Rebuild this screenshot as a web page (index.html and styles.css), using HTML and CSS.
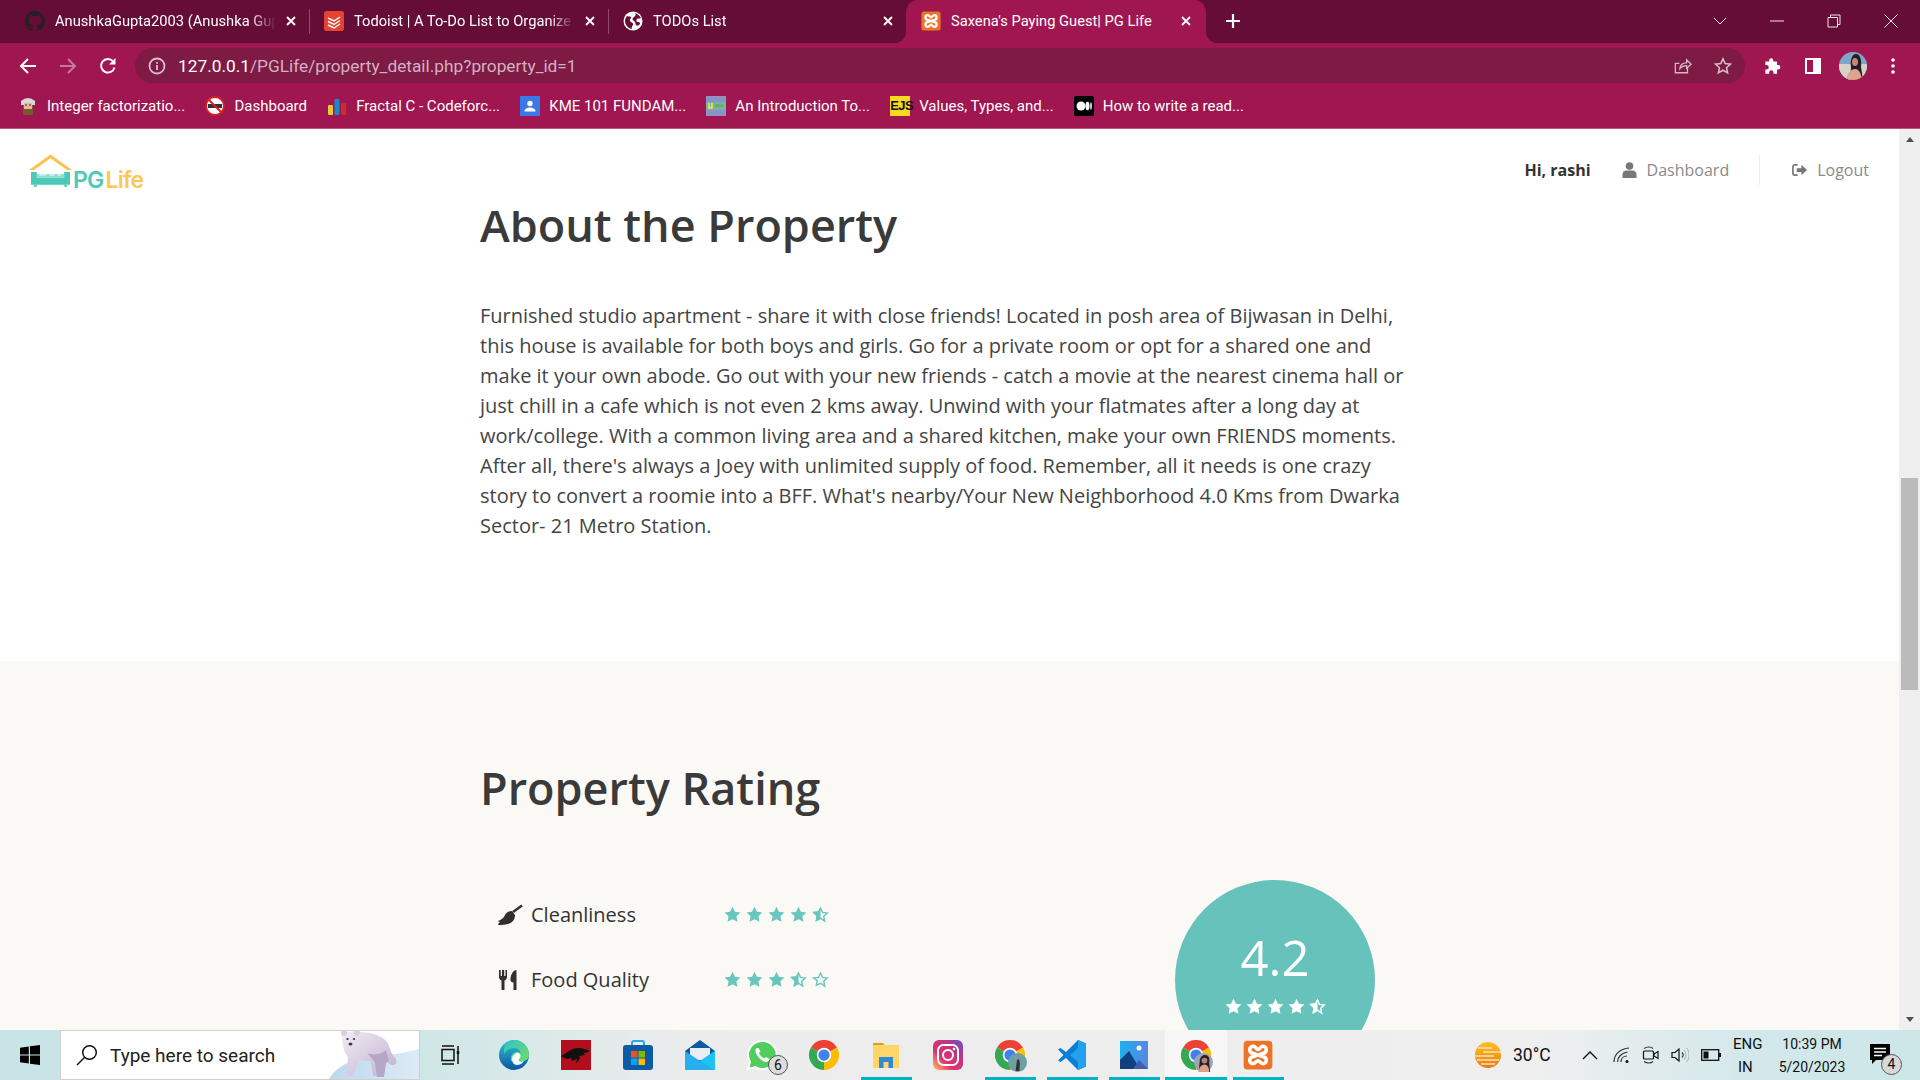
FILE: index.html
```html
<!DOCTYPE html>
<html lang="en">
<head>
<meta charset="utf-8">
<title>Saxena's Paying Guest| PG Life</title>
<link rel="stylesheet" href="styles.css">
</head>
<body>
<svg class="defs" aria-hidden="true">
  <symbol id="star" viewBox="0 0 24 24"><path d="M12 1l3.4 7.2 7.8 1-5.7 5.4 1.5 7.8L12 18.600l-7 3.800 1.500-7.800L.8 9.200l7.800-1z" fill="currentColor"/></symbol>
  <symbol id="star-half" viewBox="0 0 24 24"><path d="M12 2.800l2.800 6.200 6.800.9-5 4.700 1.300 6.700L12 17.200l-5.900 3.100 1.300-6.700-5-4.700 6.800-.9z" fill="none" stroke="currentColor" stroke-width="2"/><path d="M12 1v17.600l-7 3.800 1.500-7.800L.8 9.200l7.800-1z" fill="currentColor"/></symbol>
  <symbol id="star-empty" viewBox="0 0 24 24"><path d="M12 3l2.800 6.100 6.700.9-4.900 4.600 1.300 6.600L12 17.400l-5.900 2.800 1.300-6.600L2.500 10l6.700-.9z" fill="none" stroke="currentColor" stroke-width="2"/></symbol>
  <symbol id="chrome" viewBox="0 0 24 24"><path d="M12 12L1.600 6A12 12 0 0 1 22.400 6z" fill="#ea4335"/><path d="M12 12L22.400 6A12 12 0 0 1 12 24z" fill="#fbbc04"/><path d="M12 12L12 24A12 12 0 0 1 1.600 6z" fill="#34a853"/><circle cx="12" cy="12" r="5.800" fill="#fff"/><circle cx="12" cy="12" r="4.500" fill="#3f82ee"/></symbol>
  <symbol id="xampp" viewBox="0 0 24 24"><rect x=".5" y=".5" width="23" height="23" rx="3" fill="#ec7327"/><path d="M8 5c-3.500 0-3.500 5.400 0 5.600 2 .2 2.500 1.400 4 1.400s2-1.200 4-1.400c3.500-.2 3.500-5.600 0-5.600-2.400 0-2.400 2.500-4 2.500S10.400 5 8 5zM8 19c-3.500 0-3.500-5.400 0-5.600 2-.2 2.500-1.400 4-1.400s2 1.200 4 1.400c3.500.2 3.500 5.600 0 5.600-2.400 0-2.400-2.500-4-2.500S10.400 19 8 19z" fill="none" stroke="#fff" stroke-width="2.800"/></symbol>
</svg>

<header class="tabstrip">
  <div class="tab">
    <svg class="favicon" viewBox="0 0 16 16"><path fill="#241f24" d="M8 0C3.580 0 0 3.580 0 8c0 3.540 2.290 6.530 5.470 7.590.4.070.55-.17.55-.38 0-.19-.01-.82-.01-1.490-2.010.37-2.530-.49-2.690-.94-.09-.23-.48-.94-.82-1.130-.28-.15-.68-.52-.01-.53.63-.01 1.080.58 1.230.82.72 1.210 1.870.87 2.330.66.070-.52.28-.87.51-1.070-1.780-.2-3.640-.89-3.640-3.950 0-.87.31-1.590.82-2.150-.08-.2-.36-1.020.08-2.120 0 0 .67-.21 2.200.82.64-.18 1.320-.27 2-.27.68 0 1.360.09 2 .27 1.530-1.040 2.200-.82 2.200-.82.44 1.100.16 1.920.08 2.120.51.56.82 1.270.82 2.150 0 3.070-1.870 3.750-3.650 3.950.29.25.54.73.54 1.480 0 1.070-.01 1.930-.01 2.200 0 .21.15.46.55.38A8.013 8.013 0 0016 8c0-4.420-3.580-8-8-8z"/></svg>
    <span class="tab-title">AnushkaGupta2003 (Anushka Gupta)</span>
    <svg class="tab-close" viewBox="0 0 10 10"><path d="M1 1l8 8M9 1l-8 8"/></svg>
  </div>
  <div class="tab">
    <svg class="favicon" viewBox="0 0 20 20"><rect width="20" height="20" rx="2.500" fill="#e44332"/><path d="M4 7l6 3 6-4M4 10.500l6 3 6-4M4 14l6 3 6-4" fill="none" stroke="#fff" stroke-width="1.500"/></svg>
    <span class="tab-title">Todoist | A To-Do List to Organize Your Work</span>
    <svg class="tab-close" viewBox="0 0 10 10"><path d="M1 1l8 8M9 1l-8 8"/></svg>
  </div>
  <div class="tab tab-last">
    <svg class="favicon" viewBox="0 0 20 20"><circle cx="10" cy="10" r="9.500" fill="#fff"/><path d="M4 5c2 1 3 0 4 1s-2 2-1 4 3 1 3 3-2 3-1 5c-3 0-7-4-7-8 0-2 1-4 2-5zM12 2c2 .5 5 3 6 5-2 1-3 0-4 1s-1 3 1 3 2 1 2 2c-2 2-3 2-4 1s0-3-2-4-2-3 0-4 2-3 1-4z" fill="#640d35"/></svg>
    <span class="tab-title">TODOs List</span>
    <svg class="tab-close" viewBox="0 0 10 10"><path d="M1 1l8 8M9 1l-8 8"/></svg>
  </div>
  <div class="tab tab-active">
    <svg class="favicon"><use href="#xampp"/></svg>
    <span class="tab-title">Saxena's Paying Guest| PG Life</span>
    <svg class="tab-close" viewBox="0 0 10 10"><path d="M1 1l8 8M9 1l-8 8"/></svg>
  </div>
  <svg class="tab-new" viewBox="0 0 14 14"><path d="M7 0v14M0 7h14"/></svg>
  <div class="win-controls">
    <div class="win-btn"><svg class="win-icon" viewBox="0 0 14 14"><path d="M1 4l6 6 6-6"/></svg></div>
    <div class="win-btn"><svg class="win-icon" viewBox="0 0 14 14"><path d="M0 7h14"/></svg></div>
    <div class="win-btn"><svg class="win-icon" viewBox="0 0 14 14"><path d="M1 3.500h9.500V13H1zM3.500 3.500V1H13v9.500h-2.500"/></svg></div>
    <div class="win-btn"><svg class="win-icon" viewBox="0 0 14 14"><path d="M.5.500l13 13M13.500.500l-13 13"/></svg></div>
  </div>
</header>

<nav class="toolbar">
  <div class="tool-btn"><svg class="tool-icon" viewBox="0 0 18 18"><path d="M17 9H2M9 2L2 9l7 7" fill="none" stroke="#fff" stroke-width="2"/></svg></div>
  <div class="tool-btn"><svg class="tool-icon" viewBox="0 0 18 18"><path d="M1 9h15M9 2l7 7-7 7" fill="none" stroke="#c9789a" stroke-width="2"/></svg></div>
  <div class="tool-btn"><svg class="tool-icon" viewBox="0 0 18 18"><path d="M15.500 10.500A6.800 6.800 0 1 1 14 4.200" fill="none" stroke="#fff" stroke-width="2"/><path d="M16.500 1v6.500H10z" fill="#fff"/></svg></div>
  <div class="omnibox">
    <svg class="info-icon" viewBox="0 0 18 18"><circle cx="9" cy="9" r="7.500" fill="none" stroke="#d5c0ca" stroke-width="1.800"/><path d="M9 8v5M9 5v1.800" stroke="#d5c0ca" stroke-width="1.800"/></svg>
    <span class="url"><span class="url-host">127.0.0.1</span>/PGLife/property_detail.php?property_id=1</span>
    <div class="omni-actions">
      <div class="tool-btn"><svg class="tool-icon" viewBox="0 0 20 20"><path d="M15 11.500V17.500H1.500V7H6M6.500 13c.5-4 3.500-6.500 7.500-6.500V3l5 5-5 4.500V9.500c-3 0-5.500 1-7.500 3.500z" fill="none" stroke="#d0bcc6" stroke-width="1.400"/></svg></div>
      <div class="tool-btn"><svg class="tool-icon" viewBox="0 0 20 20"><path d="M10 2l2.400 5.300 5.800.7-4.300 3.900 1.200 5.700-5.100-2.900-5.100 2.900 1.200-5.700L1.800 8l5.800-.7z" fill="none" stroke="#d5c0ca" stroke-width="1.700"/></svg></div>
    </div>
  </div>
  <div class="tool-end">
    <div class="tool-btn"><svg class="tool-icon" viewBox="0 0 20 20"><path d="M8 1.500a2.300 2.300 0 0 1 2.300 2.300V5h4.200v4h1.200a2.500 2.500 0 0 1 0 5h-1.200v4.500H10.500v-1.400a2.400 2.400 0 0 0-4.800 0v1.400H1.500v-4.500h1.300a2.500 2.500 0 0 0 0-5H1.500V5h4.200V3.800A2.300 2.300 0 0 1 8 1.500z" fill="#fff"/></svg></div>
    <div class="tool-btn"><svg class="tool-icon" viewBox="0 0 18 18"><path d="M1 1h16v16H1zM3 3v12h6V3z" fill="#fff" fill-rule="evenodd"/></svg></div>
    <div class="tool-btn"><svg class="avatar" viewBox="0 0 28 28"><defs><clipPath id="av"><circle cx="14" cy="14" r="14"/></clipPath></defs><g clip-path="url(#av)"><rect width="28" height="28" fill="#7fa6c8"/><rect y="12" width="28" height="16" fill="#d6d2c8"/><path d="M11 28l1-13c-1-7 1-13 5-13s6 6 5 13l2 13z" fill="#231f27"/><ellipse cx="16" cy="10" rx="3" ry="4" fill="#c08a70"/><path d="M7 28c1-7 5-11 9-11s6 4 7 11z" fill="#e0a58c"/></g></svg></div>
    <div class="tool-btn"><svg class="tool-icon" viewBox="0 0 18 18"><circle cx="9" cy="3" r="1.800" fill="#fff"/><circle cx="9" cy="9" r="1.800" fill="#fff"/><circle cx="9" cy="15" r="1.800" fill="#fff"/></svg></div>
  </div>
</nav>

<nav class="bookmarks">
  <div class="bookmark"><svg class="bm-icon" viewBox="0 0 20 20"><rect x="5" y="6" width="10" height="13" fill="#7a5a30"/><path d="M3 5q7-6 14 0v4H3z" fill="#d8d8d8"/><rect x="6" y="7" width="8" height="6" fill="#e8b890"/><path d="M7 9h2M11 9h2" stroke="#333" stroke-width="1"/></svg><span>Integer factorizatio...</span></div>
  <div class="bookmark"><svg class="bm-icon" viewBox="0 0 20 20"><circle cx="10" cy="10" r="9" fill="#fff" stroke="#d81f26" stroke-width="2"/><rect x="3" y="8" width="14" height="4" fill="#333"/><path d="M4 4l12 12" stroke="#d81f26" stroke-width="2"/></svg><span>Dashboard</span></div>
  <div class="bookmark"><svg class="bm-icon" viewBox="0 0 20 20"><rect x="1" y="9" width="5" height="10" rx="1" fill="#f5c33b"/><rect x="7.500" y="3" width="5" height="16" rx="1" fill="#1a88c9"/><rect x="14" y="7" width="5" height="12" rx="1" fill="#c92c2c"/></svg><span>Fractal C - Codeforc...</span></div>
  <div class="bookmark"><svg class="bm-icon" viewBox="0 0 20 20"><rect width="20" height="20" rx="1" fill="#3b78e7"/><circle cx="10" cy="7.500" r="2.700" fill="#fff"/><path d="M4.500 15.500c0-3 3-4 5.500-4s5.500 1 5.500 4z" fill="#fff"/></svg><span>KME 101 FUNDAM...</span></div>
  <div class="bookmark"><svg class="bm-icon" viewBox="0 0 20 20"><rect width="20" height="20" fill="#8d92c4"/><rect y="6" width="20" height="8" fill="#7fb0a8"/><path d="M3 7v5h3V7" fill="none" stroke="#ecec3a" stroke-width="1.500"/><rect x="9" y="8" width="8" height="3" fill="#59b56a"/></svg><span>An Introduction To...</span></div>
  <div class="bookmark"><span class="ejs">EJS</span><span>Values, Types, and...</span></div>
  <div class="bookmark"><svg class="bm-icon" viewBox="0 0 20 20"><rect width="20" height="20" rx="2" fill="#000"/><ellipse cx="7" cy="10" rx="4.500" ry="4.500" fill="#fff"/><ellipse cx="13.500" cy="10" rx="2" ry="4.300" fill="#fff"/><ellipse cx="17" cy="10" rx=".8" ry="3.800" fill="#fff"/></svg><span>How to write a read...</span></div>
</nav>

<div class="viewport">
  <main class="page">
    <div class="site-header">
      <div class="logo">
        <svg class="logo-mark" viewBox="0 0 44 34"><path d="M0 16L22 0l22 16h-5L22 4 5 16z" fill="#fcc14c"/><path d="M2 18h6v6h28v-6h6v13H2z" fill="#4dc9b8"/><path d="M8 20h28v4H8z" fill="#8fdcd0"/><path d="M10 21h8M21 21h5M29 21h4" stroke="#fff" stroke-width="1"/><path d="M5 31h3v2H5zM36 31h3v2h-3z" fill="#4dc9b8"/></svg>
        <span class="logo-text"><span class="logo-pg">PG</span> <span class="logo-life">Life</span></span>
      </div>
      <div class="site-nav">
        <span class="hi">Hi, rashi</span>
        <a class="nav-link nav-dash"><svg class="nav-icon" viewBox="0 0 14 16"><circle cx="7" cy="4" r="3.800" fill="#777"/><path d="M0 16v-3.500C0 10 2 8.500 4 8.500h6c2 0 4 1.500 4 4V16z" fill="#777"/></svg>Dashboard</a>
        <a class="nav-link nav-out"><svg class="nav-icon" viewBox="0 0 16 14"><path d="M6 1.500H3A2 2 0 0 0 1 3.500v7a2 2 0 0 0 2 2h3" fill="none" stroke="#777" stroke-width="1.800"/><path d="M5 5h5V1.500L16 7l-6 5.500V9H5z" fill="#777"/></svg>Logout</a>
      </div>
    </div>

    <section class="about">
      <h1 class="section-title">About the Property</h1>
      <p class="about-text">Furnished studio apartment - share it with close friends! Located in posh area of Bijwasan in Delhi, this house is available for both boys and girls. Go for a private room or opt for a shared one and make it your own abode. Go out with your new friends - catch a movie at the nearest cinema hall or just chill in a cafe which is not even 2 kms away. Unwind with your flatmates after a long day at work/college. With a common living area and a shared kitchen, make your own FRIENDS moments. After all, there's always a Joey with unlimited supply of food. Remember, all it needs is one crazy story to convert a roomie into a BFF. What's nearby/Your New Neighborhood 4.0 Kms from Dwarka Sector- 21 Metro Station.</p>
    </section>

    <section class="rating">
      <h1 class="section-title">Property Rating</h1>
      <div class="rating-body">
        <div class="rating-list">
          <div class="rating-row">
            <svg class="rating-icon" viewBox="0 0 26 22"><path d="M25 1.500L16 8" stroke="#2f2f2f" stroke-width="2.500"/><path d="M18 11l-3-4c-4 0-6 2-7 4-1 3-4 5-7 6 0 0 1 1 2 1-1 1-2 2-2 3 4 0 10 0 14-3 2-2 3-4 3-7z" fill="#2f2f2f"/></svg>
            <span class="rating-label">Cleanliness</span>
            <div class="stars stars-row"><svg class="star"><use href="#star"/></svg><svg class="star"><use href="#star"/></svg><svg class="star"><use href="#star"/></svg><svg class="star"><use href="#star"/></svg><svg class="star"><use href="#star-half"/></svg></div>
          </div>
          <div class="rating-row">
            <svg class="rating-icon" viewBox="0 0 26 22"><path d="M2 1v7c0 1.500 1 3 2.500 3.500V21h3V11.500C9 11 10 9.500 10 8V1H8.500v6H7.200V1H5v6H3.700V1zM16.500 21h3V1c-3 0-6 4-6 10 0 1.500 1 2.500 3 2.500z" fill="#2f2f2f"/></svg>
            <span class="rating-label">Food Quality</span>
            <div class="stars stars-row"><svg class="star"><use href="#star"/></svg><svg class="star"><use href="#star"/></svg><svg class="star"><use href="#star"/></svg><svg class="star"><use href="#star-half"/></svg><svg class="star"><use href="#star-empty"/></svg></div>
          </div>
        </div>
        <div class="rating-circle">
          <div class="rating-value">4.2</div>
          <div class="stars stars-white"><svg class="star"><use href="#star"/></svg><svg class="star"><use href="#star"/></svg><svg class="star"><use href="#star"/></svg><svg class="star"><use href="#star"/></svg><svg class="star"><use href="#star-half"/></svg></div>
        </div>
      </div>
    </section>
  </main>
  <aside class="scrollbar">
    <div class="sb-arrow sb-up"></div>
    <div class="sb-track"><div class="sb-thumb"></div></div>
    <div class="sb-arrow sb-down"></div>
  </aside>
</div>

<footer class="taskbar">
  <div class="start"><svg class="win-logo" viewBox="0 0 20 20"><path d="M0 2.800L8.800 1.500V9.400H0zM10 1.300L20 0V9.400H10zM0 10.600H8.800V18.500L0 17.200zM10 10.600H20V20L10 18.700z" fill="#000"/></svg></div>
  <div class="search">
    <svg class="search-icon" viewBox="0 0 22 22"><circle cx="13.500" cy="8.500" r="6.800" fill="none" stroke="#111" stroke-width="1.500"/><path d="M8.500 13.500L1 21" stroke="#111" stroke-width="1.500"/></svg>
    <span class="search-text">Type here to search</span>
    <svg class="bear" viewBox="0 0 90 50"><defs><linearGradient id="ice" x1="0" y1="0" x2="1" y2="0"><stop offset="0" stop-color="#bcd8ee"/><stop offset="1" stop-color="#dcebf6"/></linearGradient><linearGradient id="fur" x1="0" y1="0" x2="1" y2="1"><stop offset="0" stop-color="#f2ecf4"/><stop offset="1" stop-color="#bfb0cf"/></linearGradient></defs><path d="M0 50c8-14 30-24 52-24 16 0 30-4 38-6v30z" fill="url(#ice)"/><path d="M13 6c2-4 5-4 7-3 3-1 6-1 8 0 10 0 24 2 30 10 3 5 4 12 8 16 3 3 1 8-3 7-3-1-5-3-7-7l-3 2-2 16h-7l-2-15-13-1-4 14-2 2-6-1 2-18C15 24 13 16 13 6z" fill="url(#fur)"/><path d="M38 24c8 3 15 1 19-3l3 11-3 2-2 14h-7l-2-15z" fill="#b5a6c6"/><circle cx="15" cy="4" r="3" fill="#d8cfe0"/><circle cx="28" cy="4" r="3" fill="#d8cfe0"/><circle cx="18.500" cy="10" r="1.100" fill="#333"/><circle cx="25" cy="10" r="1.100" fill="#333"/><ellipse cx="21.500" cy="15" rx="2" ry="1.500" fill="#4a3a44"/></svg>
  </div>
  <div class="task-apps">
    <div class="app"><svg class="app-icon" viewBox="0 0 30 30"><path d="M5 6h12M5 24h12M5 9.500h12v11H5zM21 6v5M21 14v10" fill="none" stroke="#111" stroke-width="1.500"/><path d="M21 11v3" stroke="#111" stroke-width="2.500"/></svg></div>
    <div class="app"><svg class="app-icon" viewBox="0 0 30 30"><defs><linearGradient id="edge1" x1="0" y1="0" x2="0" y2="1"><stop offset="0" stop-color="#2ec4d8"/><stop offset="1" stop-color="#0b54a0"/></linearGradient><linearGradient id="edge2" x1="0" y1="0" x2="1" y2="1"><stop offset="0" stop-color="#2fc3c8"/><stop offset="1" stop-color="#72dc66"/></linearGradient></defs><circle cx="15" cy="15" r="15" fill="url(#edge1)"/><path d="M15 0c9 0 15 7 15 15 0 4-3 6-7 6H12c-1-4 1-9 6-9 2 0 3 1 3 2 1-3-2-6-6-6-4 0-8 2-10 6C4 5 9 0 15 0z" fill="url(#edge2)"/><path d="M13 19c0-3 2-5 5-5s4 2 3 4c-1 1-2 2-1 3 1 .5 3 .5 5 0-2 3-5 4-7 4-3 0-5-3-5-6z" fill="#f4fbfb"/><path d="M21 14c1 2 0 3-1 4s-1 3 0 3c-3 0-5-2-5-5 0-1 1-2 2-3 2-1 3 0 4 1z" fill="#f4fbfb"/></svg></div>
    <div class="app"><svg class="app-icon" viewBox="0 0 30 30"><rect width="30" height="30" fill="#b30e1e"/><path d="M0 16c6-3 10-8 17-8 4 0 8 1 12 3l-4 2-3-1 2 3-6 1c2 2 0 5-3 7l1-4-5 2-1-3-4 1c-2-1-5-2-6-3z" fill="#111"/></svg></div>
    <div class="app"><svg class="app-icon" viewBox="0 0 30 30"><path d="M9 6V3a2 2 0 0 1 2-2h8a2 2 0 0 1 2 2v3" fill="none" stroke="#2ea4e0" stroke-width="2"/><rect x="0" y="5" width="30" height="25" rx="3" fill="#0c5ba4"/><rect x="8" y="11" width="6.500" height="6.500" fill="#f25022"/><rect x="15.500" y="11" width="6.500" height="6.500" fill="#7fba00"/><rect x="8" y="18.500" width="6.500" height="6.500" fill="#00a4ef"/><rect x="15.500" y="18.500" width="6.500" height="6.500" fill="#ffb900"/></svg></div>
    <div class="app"><svg class="app-icon" viewBox="0 0 30 30"><path d="M0 11L15 0l15 11v19H0z" fill="#0c5ba4"/><path d="M5 8h20v12H5z" fill="#e8eef4"/><path d="M0 11l15 10 15-10v19H0z" fill="#27aeef"/><path d="M15 21l15-10v19z" fill="#1fc3f3"/></svg></div>
    <div class="app"><div class="whatsapp"><svg class="app-icon" viewBox="0 0 30 30"><path d="M15 1A14 14 0 0 0 3 22L1 29l7.500-2A14 14 0 1 0 15 1z" fill="#4fce5d" stroke="#fff" stroke-width="2"/><path d="M10 8c-2 1-2 4 0 7 2.500 4 6 7 9 7 2 0 3.500-1.500 3.500-3l-3.500-2-1.500 1.500c-2-.5-4.500-3-5.500-5.500l1.500-1.500L11.500 8z" fill="#fff"/></svg><span class="badge">6</span></div></div>
    <div class="app"><svg class="app-icon"><use href="#chrome"/></svg></div>
    <div class="app app-running"><svg class="app-icon" viewBox="0 0 30 30"><path d="M2 4a1 1 0 0 1 1-1h9l2 3H2z" fill="#e0a000"/><rect x="2" y="5" width="26" height="23" rx="1" fill="#fdd667"/><path d="M8 28V17h14v11h-4.500v-6h-5v6z" fill="#2f88d8"/></svg></div>
    <div class="app"><svg class="app-icon" viewBox="0 0 30 30"><defs><linearGradient id="ig" x1="0" y1="1" x2="1" y2="0"><stop offset="0" stop-color="#fdc468"/><stop offset=".35" stop-color="#e1306c"/><stop offset=".7" stop-color="#c13584"/><stop offset="1" stop-color="#5b51d8"/></linearGradient></defs><rect width="30" height="30" rx="6" fill="url(#ig)"/><rect x="5" y="5" width="20" height="20" rx="5.500" fill="none" stroke="#fff" stroke-width="2"/><circle cx="15" cy="15" r="5" fill="none" stroke="#fff" stroke-width="2"/><circle cx="21" cy="9" r="1.300" fill="#fff"/></svg></div>
    <div class="app app-running"><div class="chrome-profile"><svg class="app-icon"><use href="#chrome"/></svg><svg class="profile-badge" viewBox="0 0 20 20"><circle cx="10" cy="10" r="10" fill="#6f9ea5"/><path d="M8 19l1-8c0-4 2-6 3-3s0 7 0 11z" fill="#333"/></svg></div></div>
    <div class="app app-running"><svg class="app-icon" viewBox="0 0 30 30"><path d="M21 0L9 12 3.500 8 1 9.500 6.500 15 1 20.500 3.500 22 9 18l12 12 8-3.500V3.500z" fill="#0a7ed4"/><path d="M21 0l8 3.500v23L21 30zm0 8l-8 7 8 7z" fill="#23a1ee" fill-rule="evenodd"/></svg></div>
    <div class="app app-running"><svg class="app-icon" viewBox="0 0 30 30"><defs><linearGradient id="ph" x1="0" y1="0" x2="1" y2="0"><stop offset="0" stop-color="#1fb0ef"/><stop offset="1" stop-color="#5a85e0"/></linearGradient></defs><rect x="1" y="1" width="28" height="28" fill="url(#ph)"/><circle cx="20" cy="8" r="2.500" fill="#fff"/><path d="M1 29V20l9-9 11 18z" fill="#123f7e"/><path d="M14 29l6-9 9 9z" fill="#3d5fae"/></svg></div>
    <div class="app app-running app-active"><div class="chrome-profile"><svg class="app-icon"><use href="#chrome"/></svg><svg class="profile-badge" viewBox="0 0 20 20"><circle cx="10" cy="10" r="10" fill="#9fa5b0"/><path d="M5 20l1-11c0-5 3-7 6-7s5 3 4 8l1 10z" fill="#25202a"/><circle cx="11" cy="8" r="3" fill="#b98068"/><path d="M5 20c0-5 3-8 6-8s5 3 5 8z" fill="#dd9f87"/></svg></div></div>
    <div class="app app-running"><svg class="app-icon"><use href="#xampp"/></svg></div>
  </div>
  <div class="tray">
    <svg class="weather" viewBox="0 0 28 32"><defs><linearGradient id="sun" x1="0" y1="0" x2="0" y2="1"><stop offset="0" stop-color="#fdc020"/><stop offset="1" stop-color="#f07a10"/></linearGradient></defs><circle cx="15" cy="16" r="13" fill="url(#sun)"/><path d="M5 9h14M10 13h18M1 17h20M4 21h22M8 25h14" stroke="#f3e2c0" stroke-width="1.600"/></svg>
    <span class="temp">30°C</span>
    <svg class="tray-up" viewBox="0 0 16 10"><path d="M1 9l7-7 7 7" fill="none" stroke="#111" stroke-width="1.400"/></svg>
    <svg class="tray-icon" viewBox="0 0 18 18"><path d="M1 16C1 8 7 3 16 2M4.500 16c0-5 4-9 10-10M8 16c0-3 2-6 6-6" fill="none" stroke="#333" stroke-width="1.200"/><circle cx="14" cy="15.500" r="1.500" fill="#111"/></svg>
    <svg class="tray-icon" viewBox="0 0 18 18"><path d="M2 2.500C5 .5 9 .5 11 2.500M2 15.500c3 2 7 2 9 0" fill="none" stroke="#333" stroke-width="1.100"/><rect x="1.500" y="5" width="10" height="8" rx="1" fill="none" stroke="#111" stroke-width="1.200"/><path d="M12 8l4-2.500v7L12 10z" fill="none" stroke="#111" stroke-width="1.200"/></svg>
    <svg class="tray-icon" viewBox="0 0 18 18"><path d="M1 6.500h3L8 3v12l-4-3.500H1z" fill="none" stroke="#111" stroke-width="1.200"/><path d="M11 6.500c1.500 1.500 1.500 3.500 0 5" fill="none" stroke="#333" stroke-width="1.100"/><path d="M13 4c2.500 3 2.500 7 0 10M15.500 2c3.500 4 3.500 10 0 14" fill="none" stroke="#aaa" stroke-width="1"/></svg>
    <svg class="tray-battery" viewBox="0 0 20 12"><rect x=".7" y=".7" width="17" height="10.600" fill="none" stroke="#111" stroke-width="1.300"/><rect x="2.500" y="2.500" width="5" height="7" fill="#111"/><rect x="18" y="4" width="2" height="4" fill="#111"/></svg>
    <div class="lang"><span>ENG</span><span>IN</span></div>
    <div class="clock"><span>10:39 PM</span><span>5/20/2023</span></div>
    <div class="notif"><svg class="notif-icon" viewBox="0 0 20 20"><path d="M0 0h20v16H6l-4 4v-4H0z" fill="#000"/><path d="M4 4.500h12M4 8h12M4 11.500h8" stroke="#fff" stroke-width="1.300"/></svg><span class="badge badge-notif">4</span></div>
  </div>
</footer>
</body>
</html>
```

FILE: styles.css
```css
* { box-sizing: border-box; }
html, body { margin: 0; height: 100%; }
body { display: flex; flex-direction: column; height: 1080px; overflow: hidden; font-family: "Open Sans", sans-serif; color: #333; background: #fff; }
.defs { width: 0; height: 0; position: absolute; }

/* Tab strip */
.tabstrip { display: flex; align-items: stretch; height: 43px; padding-left: 10px; background: #650d36; font-family: Roboto, "Liberation Sans", sans-serif; font-size: 14.700px; color: #fff; }
.tab { position: relative; display: flex; align-items: center; width: 299px; padding: 0 0 2px 15px; }
.tab::after { content: ""; position: absolute; right: -1px; top: 9px; height: 25px; width: 1px; background: #8d4a69; }
.tab-last::after { display: none; }
.tab-last { width: 298px; }
.favicon { flex: none; width: 20px; height: 20px; margin-right: 10px; }
.tab-title { flex: 1; min-width: 0; white-space: nowrap; overflow: hidden; -webkit-mask-image: linear-gradient(90deg, #000 88%, transparent 100%); mask-image: linear-gradient(90deg, #000 88%, transparent 100%); }
.tab-close { flex: none; width: 10px; height: 10px; margin: 0 13px 0 10px; fill: none; stroke: #fff; stroke-width: 1.800; }
.tab-active { width: 300px; background: #a01650; border-radius: 12px 12px 0 0; }
.tab-active .tab-close { margin-right: 15px; }
.tab-active .tab-title { -webkit-mask-image: none; mask-image: none; }
.tab-active::before, .tab-active::after { content: ""; position: absolute; bottom: 0; top: auto; width: 12px; height: 12px; }
.tab-active::before { left: -12px; background: radial-gradient(circle at 0 0, transparent 12px, #a01650 12.500px); }
.tab-active::after { right: -12px; background: radial-gradient(circle at 100% 0, transparent 12px, #a01650 12.500px); }
.tab-new { flex: none; width: 14px; height: 14px; align-self: center; margin: 0 0 2px 20px; fill: none; stroke: #fff; stroke-width: 2.200; }
.win-controls { margin-left: auto; display: flex; padding-bottom: 2px; }
.win-btn { width: 57px; display: flex; align-items: center; justify-content: center; }
.win-btn:last-child { width: 58px; }
.win-icon { width: 14px; height: 14px; fill: none; stroke: #f3e6ec; stroke-width: 1; }

/* Toolbar */
.toolbar { display: flex; align-items: flex-start; height: 40px; padding: 5px 0 0 8px; background: #a01650; }
.tool-btn { flex: none; width: 40px; height: 35px; display: flex; align-items: center; justify-content: center; }
.tool-icon { width: 18px; height: 18px; }
.omnibox { flex: none; display: flex; align-items: center; width: 1610px; height: 35px; margin-left: 7px; padding: 0 2px 0 13px; background: #7e1a44; border-radius: 18px; font-family: Roboto, "Liberation Sans", sans-serif; font-size: 17.300px; color: #d3b0c0; }
.info-icon { flex: none; width: 18px; height: 18px; margin-right: 12px; }
.url-host { color: #fff; }
.omni-actions { margin-left: auto; display: flex; }
.tool-end { display: flex; margin-left: 8px; }
.avatar { width: 28px; height: 28px; }

/* Bookmarks */
.bookmarks { display: flex; align-items: center; gap: 20.200px; height: 46px; padding-left: 18px; background: #a01650; border-bottom: 1px solid #c2537f; font-family: Roboto, "Liberation Sans", sans-serif; font-size: 15px; color: #fff; }
.bookmark { display: flex; align-items: center; gap: 9px; white-space: nowrap; }
.bm-icon { flex: none; width: 20px; height: 20px; }
.ejs { width: 20px; height: 20px; background: #f7d91f; color: #111; font: bold 13px/20px "Liberation Sans", sans-serif; letter-spacing: -.5px; text-align: center; }

/* Page */
.viewport { flex: 1; min-height: 0; display: flex; }
.page { position: relative; flex: 1; min-width: 0; overflow: hidden; }
.site-header { position: absolute; top: 0; left: 0; right: 0; height: 82px; display: flex; justify-content: space-between; padding: 25px 30px 0 29px; background: #fff; }
.logo { display: flex; align-items: flex-start; }
.logo-mark { width: 43px; height: 34px; margin-right: 1px; }
.logo-text { font-family: Inter, sans-serif; font-weight: 600; font-size: 23px; line-height: 20px; margin-top: 16px; letter-spacing: -.8px; word-spacing: -3px; white-space: nowrap; }
.logo-pg { color: #4dc9b8; }
.logo-life { color: #fdc752; }
.site-nav { display: flex; align-items: flex-start; font-size: 16px; line-height: 30px; padding-top: 1px; }
.hi { font-weight: 700; color: #333; margin-right: 31px; }
.nav-link { display: flex; align-items: center; height: 30px; color: #8a8a8a; white-space: nowrap; }
.nav-icon { flex: none; width: 15px; height: 16px; margin-right: 10px; }
.nav-dash { padding-right: 30px; border-right: 1px solid #ececec; }
.nav-out { padding-left: 32px; }

.section-title { margin: 0; font-size: 45px; line-height: 48px; font-weight: 600; color: #3a3a3a; }
.about { height: 532px; padding: 72px 0 0 480px; background: #fff; }
.about-text { width: 935px; margin: 52px 0 0; font-size: 20px; line-height: 30px; color: #444; }
.rating { height: 500px; padding: 103px 0 0 480px; background: #fbf9f6; }
.rating-body { display: flex; align-items: flex-start; margin-top: 68px; }
.rating-list { width: 695px; }
.rating-row { display: flex; align-items: center; height: 30px; margin-top: 20px; margin-bottom: 35px; }
.rating-icon { flex: none; width: 26px; height: 22px; margin: 0 8px 0 17px; }
.rating-label { width: 193px; padding-bottom: 2px; font-size: 20px; color: #333; white-space: nowrap; }
.stars { display: flex; gap: 5px; color: #68c6bf; }
.stars-row { padding-bottom: 1px; }
.star { width: 17px; height: 17px; }
.rating-circle { flex: none; width: 200px; height: 200px; border-radius: 50%; background: #67c2bc; color: #fff; display: flex; flex-direction: column; align-items: center; }
.rating-value { margin-top: 43px; font-size: 49px; line-height: 68px; }
.stars-white { color: #fff; margin-top: 7px; gap: 4px; }

/* Scrollbar */
.scrollbar { flex: none; width: 21px; display: flex; flex-direction: column; background: #efefef; }
.sb-arrow { flex: none; height: 21px; display: flex; align-items: center; justify-content: center; }
.sb-up::before { content: ""; border: 4.500px solid transparent; border-top: 0; border-bottom: 5px solid #505050; }
.sb-down::before { content: ""; border: 4.500px solid transparent; border-bottom: 0; border-top: 5px solid #505050; }
.sb-track { flex: 1; }
.sb-thumb { height: 212px; margin: 328px 2px 0; background: #bbb; }

/* Taskbar */
.taskbar { flex: none; display: flex; height: 50px; background: linear-gradient(90deg, #c9e4e6 0, #cfe6e7 22%, #ececec 36%, #efefef 80%, #d3e8eb 91%, #cce6e8 100%); font-family: Roboto, "Liberation Sans", sans-serif; color: #111; }
.start { flex: none; width: 60px; display: flex; align-items: center; justify-content: center; }
.win-logo { width: 20px; height: 20px; }
.search { flex: none; position: relative; width: 360px; margin-right: 1px; display: flex; align-items: center; padding-left: 15px; background: #fff; border: 1px solid #cfcfcf; overflow: hidden; }
.search-icon { flex: none; width: 22px; height: 22px; margin-right: 12px; }
.search-text { font-size: 19px; color: #222; }
.bear { position: absolute; right: 0; bottom: 0; width: 90px; height: 50px; }
.task-apps { display: flex; }
.app { position: relative; flex: none; width: 62px; display: flex; align-items: center; justify-content: center; }
.app-icon { display: block; width: 30px; height: 30px; }
.app-running::after { content: ""; position: absolute; left: 6px; right: 5px; bottom: 0; height: 3px; background: #05b2c4; }
.app-active { background: #f7f7f7; }
.app-active::after { left: 0; right: 0; }
.whatsapp, .chrome-profile { position: relative; }
.whatsapp { width: 30px; height: 30px; }
.badge { position: absolute; right: -11px; bottom: -5px; width: 20px; height: 20px; border-radius: 50%; border: 1px solid #555; background: #ddd; color: #111; font-size: 14px; line-height: 18px; text-align: center; }
.profile-badge { position: absolute; right: -2px; bottom: -2px; width: 19px; height: 19px; }
.tray { flex: 1; display: flex; align-items: center; padding-left: 184px; min-width: 0; }
.weather { flex: none; width: 28px; height: 32px; }
.temp { font-size: 17.500px; margin-left: 12px; width: 69px; }
.tray-up { flex: none; width: 16px; height: 10px; margin-right: 15px; }
.tray-icon { flex: none; width: 18px; height: 18px; margin-right: 11px; }
.tray-battery { flex: none; width: 20px; height: 12px; margin-left: 1px; }
.lang { width: 49px; margin-left: 3px; display: flex; flex-direction: column; gap: 3px; padding-top: 1px; font-size: 15px; line-height: 20px; padding-left: 9px; }
.lang span:last-child { padding-left: 5px; }
.clock { display: flex; flex-direction: column; gap: 3px; padding-top: 1px; align-items: center; width: 78px; font-size: 14px; line-height: 20px; }
.notif { position: relative; width: 24px; height: 24px; margin-left: 19px; }
.notif-icon { width: 20px; height: 22px; }
.badge-notif { right: -8px; bottom: -8px; width: 21px; height: 21px; line-height: 19px; background: #d8d8d8; }
```
